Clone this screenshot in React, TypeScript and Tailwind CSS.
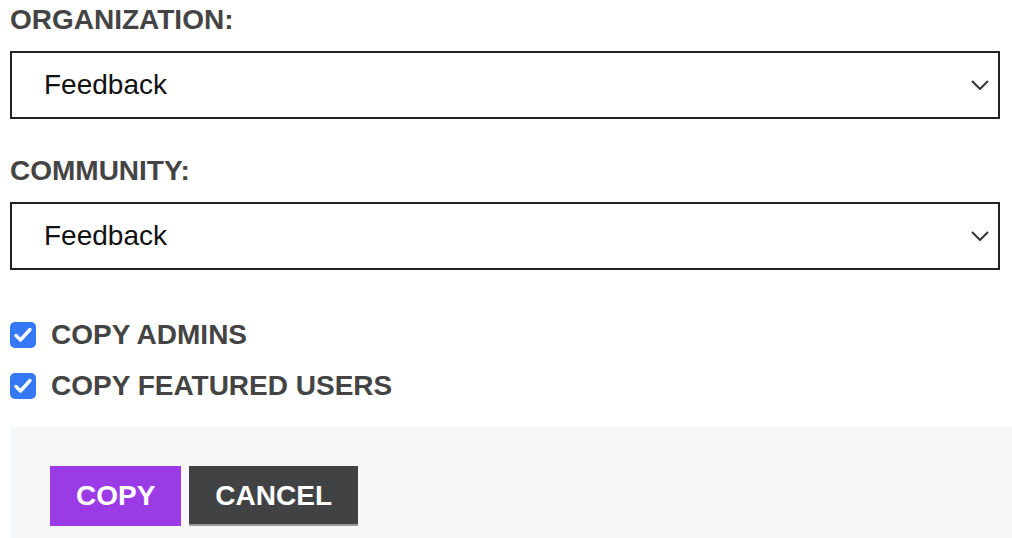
import React from "react";

const font = { fontFamily: '"Liberation Sans", Arial, Helvetica, sans-serif' };

function Chevron() {
  return (
    <svg width="18" height="10" viewBox="0 0 18 10" className="shrink-0">
      <path d="M1 1 L9 9 L17 1" fill="none" stroke="#333" strokeWidth="2" />
    </svg>
  );
}

function SelectBox({ value }: { value: string }) {
  return (
    <div className="mr-[12px] flex h-[68px] items-center justify-between border-2 border-[#222] bg-white pl-[32px] pr-[9px]">
      <span className="text-[28px] leading-none text-[#111]">{value}</span>
      <Chevron />
    </div>
  );
}

function Check({ label }: { label: string }) {
  return (
    <div className="flex h-[26px] items-center gap-[15px]">
      <div className="flex h-[26px] w-[26px] items-center justify-center rounded-[5px] bg-[#3478f6]">
        <svg width="26" height="26" viewBox="0 0 26 26">
          <path d="M6 13.5 L10.5 18 L20 7.5" fill="none" stroke="#fff" strokeWidth="3.4" strokeLinecap="round" strokeLinejoin="round" />
        </svg>
      </div>
      <span className="text-[28px] font-bold leading-none text-[#444]">{label}</span>
    </div>
  );
}

export default function App() {
  return (
    <div className="w-[1012px] h-[538px] overflow-hidden bg-white pl-[10px]" style={font}>
      <div className="mt-[4px] mb-[15px] text-[28px] font-bold leading-[32px] text-[#444]">ORGANIZATION:</div>
      <SelectBox value="Feedback" />
      <div className="mt-[36px] mb-[15px] text-[28px] font-bold leading-[32px] text-[#444]">COMMUNITY:</div>
      <SelectBox value="Feedback" />
      <div className="mt-[52px] flex flex-col gap-[25px]">
        <Check label="COPY ADMINS" />
        <Check label="COPY FEATURED USERS" />
      </div>
      <div className="mt-[28px] flex h-[112px] items-start gap-[8px] bg-[#f6f7f9] pl-[40px] pt-[39px]">
        <button className="flex h-[60px] items-center bg-[#9b3be6] px-[26px] text-[28px] font-bold leading-none text-white">COPY</button>
        <button className="flex h-[60px] items-center border-b-2 border-[#9a9a9a] bg-[#414244] px-[26px] pt-[2px] text-[28px] font-bold leading-none text-white">CANCEL</button>
      </div>
    </div>
  );
}
